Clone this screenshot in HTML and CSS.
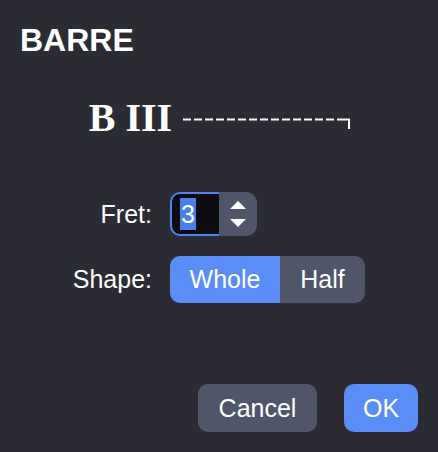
FILE: index.html
```html
<!DOCTYPE html>
<html>
<head>
<meta charset="utf-8">
<link rel="stylesheet" href="styles.css">
</head>
<body>
<div class="dialog">
  <div class="title">BARRE</div>
  <div class="barre">
    <span class="barre-text">B III</span>
    <svg class="barre-line" width="168" height="12" viewBox="0 0 168 12">
      <path d="M0 1.5 H158" stroke="#ffffff" stroke-width="2" stroke-dasharray="8 3" fill="none"/>
      <path d="M158 1.5 H166 V11" stroke="#ffffff" stroke-width="2" fill="none"/>
    </svg>
  </div>
  <div class="form">
    <div class="label">Fret:</div>
    <div class="spin">
      <div class="spin-input"><span class="sel">3</span></div>
      <div class="spin-step">
        <svg width="18" height="28" viewBox="0 0 18 28">
          <path d="M9 1 L17 9 H1 Z" fill="#ffffff"/>
          <path d="M9 27 L17 19 H1 Z" fill="#ffffff"/>
        </svg>
      </div>
    </div>
    <div class="label">Shape:</div>
    <div class="seg">
      <div class="seg-item seg-on">Whole</div>
      <div class="seg-item seg-off">Half</div>
    </div>
  </div>
  <div class="footer">
    <div class="btn btn-cancel">Cancel</div>
    <div class="btn btn-ok">OK</div>
  </div>
</div>
</body>
</html>
```
FILE: styles.css
```css
html, body {
  margin: 0;
  padding: 0;
  background: #2b2b33;
}
body {
  width: 438px;
  height: 452px;
  font-family: "Liberation Sans", Arial, sans-serif;
  color: #ffffff;
}
.dialog {
  box-sizing: border-box;
  height: 452px;
  padding: 22px 20px 20px 20px;
  display: flex;
  flex-direction: column;
}
.title {
  font-size: 32px;
  font-weight: 700;
  line-height: 37px;
}
.barre {
  margin-top: 36px;
  display: flex;
  justify-content: center;
  align-items: flex-start;
  gap: 11px;
  padding-left: 2px;
}
.barre-text {
  font-family: "Liberation Serif", "Times New Roman", serif;
  font-weight: 700;
  font-size: 40px;
  line-height: 46px;
}
.barre-line {
  margin-top: 23px;
}
.form {
  margin-top: 51px;
  display: grid;
  grid-template-columns: 132px auto;
  column-gap: 18px;
  row-gap: 20px;
  align-items: center;
  justify-items: start;
}
.label {
  justify-self: end;
  font-size: 25px;
}
.spin {
  display: flex;
  height: 44px;
}
.spin-input {
  box-sizing: border-box;
  width: 49px;
  height: 44px;
  background: #0c0c11;
  border: 2px solid #4d84f2;
  border-right: none;
  border-radius: 10px 0 0 10px;
  display: flex;
  align-items: center;
  padding-left: 8px;
}
.sel {
  background: #4a7fea;
  font-size: 25px;
  line-height: 32px;
  padding: 0 1px;
}
.spin-step {
  width: 38px;
  height: 44px;
  background: #50556a;
  border-radius: 0 11px 11px 0;
  display: flex;
  align-items: center;
  justify-content: center;
}
.seg {
  display: flex;
  height: 47px;
  border-radius: 10px;
  overflow: hidden;
}
.seg-item {
  display: flex;
  align-items: center;
  justify-content: center;
  font-size: 25px;
}
.seg-on {
  width: 110px;
  background: #5a8ef6;
}
.seg-off {
  width: 85px;
  background: #50556a;
}
.footer {
  margin-top: auto;
  display: flex;
  justify-content: flex-end;
  gap: 27px;
}
.btn {
  height: 48px;
  border-radius: 10px;
  display: flex;
  align-items: center;
  justify-content: center;
  font-size: 25px;
}
.btn-cancel {
  width: 119px;
  background: #50556a;
}
.btn-ok {
  width: 74px;
  background: #5a8ef6;
}
```
